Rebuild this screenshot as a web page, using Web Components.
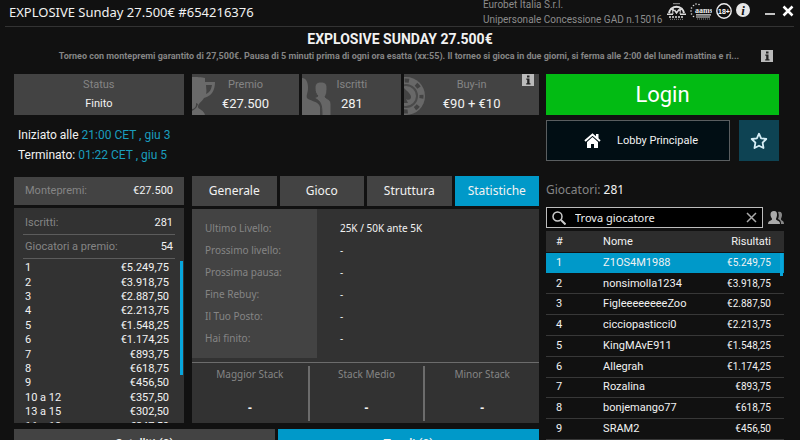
<!DOCTYPE html>
<html lang="it">
<head>
<meta charset="utf-8">
<meta name="viewport" content="width=device-width, initial-scale=1">
<title>EXPLOSIVE Sunday 27.500€</title>
<style>
html,body{margin:0;height:100%}
body{background:#111;color:#f2f2f2;font:12px/16px Roboto,"Liberation Sans",sans-serif;overflow:hidden;
--card:#434343;--panel:#323232;--muted:#858585;--blue:#0099c9;--tahoma:"Noto Sans","DejaVu Sans Condensed",sans-serif}
</style>
</head>
<body>
<tournament-lobby></tournament-lobby>
<script>
const define=(name,css,html,setup)=>{
  const t=document.createElement('template');
  t.innerHTML=`<style>*{box-sizing:border-box}button{font:inherit;color:inherit;border:0;margin:0;padding:0;background:none;cursor:pointer}svg{display:block}${css}</style>${html}`;
  customElements.define(name,class extends HTMLElement{
    constructor(){super();this.attachShadow({mode:'open'}).append(t.content.cloneNode(true));}
    connectedCallback(){if(setup)setup(this,this.shadowRoot);}
  });
};

define('title-bar',`
:host{display:flex;height:27px;margin:0 6px 0 5px;padding-left:4px;border-bottom:1px solid #333;align-items:flex-start}
h1{flex:1;margin:0;font:13px/25px var(--tahoma);white-space:nowrap}
p{margin:-3px 0 0;width:184px;font-size:10px;line-height:15px;color:#8c8c8c;white-space:nowrap}
.marks{display:flex;gap:4px;padding-top:3px;height:20px}
.win{display:flex;gap:6px;margin:5px 0 0 14px}
`,`
<h1>EXPLOSIVE Sunday 27.500€ #654216376</h1>
<p>Eurobet Italia S.r.l.<br>Unipersonale Concessione GAD n.15016</p>
<div class="marks">
<svg width="19" height="17" viewBox="0 0 19 17" fill="none" stroke="#ddd"><path d="M6 .7h7" stroke="#999"/><path d="M2 10A7.600 7.600 0 0 1 17 10" stroke-width="2"/><path d="M0 11.300h6M13 11.300h6" stroke-width="1.600"/><path d="M6 11c-1-5 1-7 3.500-7s4.500 2 3.500 7" stroke-width="1"/><path d="M3.500 5.500l3.500 2M15.500 5.500l-3.500 2M7.500 7l2 3L12 6.500" stroke-width="1.500"/><path d="M2 14h15" stroke-width="1.500" stroke-dasharray="2 1"/><path d="M3 16.300h13" stroke="#888" stroke-dasharray="1 1"/></svg>
<svg width="22" height="17" viewBox="0 0 22 17"><g fill="#ddd"><circle cx="1.500" cy="5" r=".8"/><circle cx="1" cy="8" r=".8"/><circle cx="1.500" cy="11" r=".8"/><circle cx="3.500" cy="2.500" r=".8"/><circle cx="3.500" cy="13.500" r=".8"/><circle cx="6" cy="1" r=".8"/><circle cx="9" cy="1.500" r=".8"/><path d="M6 11.300h15v1.200H6zM6 13.500h14v1H6z"/></g><path d="M7 16h13" stroke="#888" stroke-dasharray="1 1"/><text x="5" y="10" fill="#eee" font-family="Liberation Serif,serif" font-weight="bold" font-size="8">aams</text></svg>
<svg width="16" height="17" viewBox="0 0 16 17"><circle cx="8" cy="8" r="7.200" fill="none" stroke="#eee" stroke-width="1.400"/><text x="8" y="10.500" text-anchor="middle" fill="#fff" font-family="Liberation Sans,sans-serif" font-weight="bold" font-size="7">18+</text></svg>
<svg width="14" height="15" viewBox="0 0 14 15"><circle cx="7" cy="7" r="7" fill="#e6e6e6"/><text x="7" y="11.500" text-anchor="middle" fill="#111" font-family="Liberation Serif,serif" font-weight="bold" font-style="italic" font-size="13">i</text></svg>
</div>
<div class="win">
<button aria-label="Riduci"><svg width="12" height="12"><path d="M1 9h10" stroke="#fff" stroke-width="1.500"/></svg></button>
<button aria-label="Chiudi"><svg width="12" height="12"><path d="M1.500 1.500l9 9M10.500 1.500l-9 9" stroke="#fff" stroke-width="2.500"/></svg></button>
</div>`);

define('info-mark',`:host{display:block}svg{width:12px;height:12px}`,
`<svg viewBox="0 0 12 12"><path fill="#bbb" d="M0 0h12v12H0z"/><path fill="#222" d="M5 1.500h2.500v2H5zM4.300 4.500h3.200v4.700h1v1.300H4.200V9.200h1V5.800h-.9z"/></svg>`);

define('lobby-heading',`
:host{display:block;padding-top:3px}
h2{margin:0;font:bold 14px/19px Roboto,sans-serif;text-align:center}
div{display:flex;align-items:center;gap:8px;height:14px;margin-bottom:1px;padding:0 27px 0 45px}
p{margin:0;flex:1;text-align:center;font-weight:bold;font-size:9px;line-height:14px;color:#858585;white-space:nowrap;overflow:hidden;text-overflow:ellipsis}
`,`<h2>EXPLOSIVE SUNDAY 27.500€</h2><div><p>Torneo con montepremi garantito di 27,500€. Pausa di 5 minuti prima di ogni ora esatta (xx:55). Il torneo si gioca in due giorni, si ferma alle 2:00 del lunedí mattina e ri...</p><info-mark></info-mark></div>`);

define('stat-card',`
:host{display:block;position:relative;background:var(--card);height:41px;text-align:center;overflow:hidden}
.k{color:var(--muted);font-size:11px;line-height:14px;padding-top:4px}
.v{font-size:11px;line-height:16px;padding-top:4px}
:host([big]) .v{font-size:13px}
.i{position:absolute;left:0;bottom:0}
.k,.v{position:relative}
::slotted(info-mark){position:absolute;right:0;top:0}
`,`<div class="i"></div><div class="k"></div><div class="v"><slot></slot></div><slot name="info"></slot>`,(el,r)=>{
  r.querySelector('.k').textContent=el.getAttribute('label');
  const icons={
    cup:'<svg width="24" height="41" viewBox="0 0 24 41"><path fill="#6a6a6a" d="M0 3c4 0 10 0 13 1v4h10c0 8-3 14-11 16-2 4-6 5-6 9 0 2 6 3 7 8H0z"/><path fill="#434343" d="M14 11h6c-1 5-2 7-6 9 1-3 0-6 0-9zM0 35c2 0 4-2 4-4v-2l2 1c-1 4-3 5-6 7z"/></svg>',
    people:'<svg width="29" height="41" viewBox="0 0 29 41"><g fill="#666"><path d="M0 4c4 0 6 4 6 10 0 5-2 7-1 10 2 3 12 3 13 9v8H0z"/><path stroke="#434343" d="M13 14c0-4 2-6 6-6s6 2 6 6c0 5-1 7-2 9 2 2 6 3 6 7v12h-9c0-12-1-15-8-18 2-1 3-1 4-2-2-2-3-4-3-8z"/></g></svg>',
    chip:'<svg width="22" height="41" viewBox="0 0 22 41"><circle cx="2" cy="22" r="19" fill="#686868"/><circle cx="2" cy="22" r="15.500" fill="none" stroke="#434343" stroke-width="4" stroke-dasharray="4.500 7.700" stroke-dashoffset="2"/><circle cx="2" cy="22" r="11" fill="none" stroke="#4a4a4a" stroke-width="2"/><path fill="#444" d="M0 14c4 4 7 6 7 9 0 2-2 4-5 2l2 4H0z"/></svg>'};
  r.querySelector('.i').innerHTML=icons[el.getAttribute('icon')]||'';
});

define('start-times',`
:host{display:block;padding:10px 4px 0;line-height:20px;height:61px}
p{margin:0}span{color:#1a9dbd}
`,`<p>Iniziato alle <span>21:00 CET , giu 3</span></p><p>Terminato: <span>01:22 CET , giu 5</span></p>`);

define('prize-panel',`
:host{display:flex;flex-direction:column;gap:3px;font-size:11px;padding-top:1px}
.row{display:flex;justify-content:space-between;align-items:center;padding:0 2px}
.row span{color:var(--muted)}
.top{background:var(--card);height:28px;padding:0 11px}
.body{flex:1;background:var(--panel);padding:3px 9px 0;position:relative}
.body .row{height:24px;border-bottom:1px solid #5c5c5c}
.list{height:162px;margin-top:2px;overflow:hidden}
table{width:100%;height:173px;border-collapse:collapse;line-height:14px}
td{padding:0 2px}td+td{text-align:right;padding-right:6px}
.bar{position:absolute;right:1px;top:53px;width:3px;height:114px;background:#08a6dc}
`,`<div class="row top"><span>Montepremi:</span>€27.500</div>
<div class="body"><div class="row"><span>Iscritti:</span>281</div><div class="row"><span>Giocatori a premio:</span>54</div>
<div class="list"><table></table></div><div class="bar"></div></div>`,(el,r)=>{
  r.querySelector('table').innerHTML=[['1','5.249,75'],['2','3.918,75'],['3','2.887,50'],['4','2.213,75'],['5','1.548,25'],['6','1.174,25'],['7','893,75'],['8','618,75'],['9','456,50'],['10 a 12','357,50'],['13 a 15','302,50'],['16 a 18','247,50']].map(([a,b])=>`<tr><td>${a}</td><td>€${b}</td></tr>`).join('');
});

define('stats-panel',`
:host{display:flex;flex-direction:column;gap:3px;font-family:var(--tahoma);font-size:10px}
nav{display:grid;grid-template-columns:repeat(4,1fr);gap:3px}
nav button{height:30px;background:var(--card);font-size:12px}
nav button[aria-selected=true]{background:var(--blue)}
.body{background:var(--panel);flex:1;display:flex;flex-direction:column}
dl{margin:0;display:grid;grid-template-columns:36% 1fr}
dt,dd{margin:0;line-height:22px;height:22px}
dt{background:var(--card);color:var(--muted);padding-left:13px}
dd{padding-left:23px}
dt:first-of-type,dd:first-of-type{padding-top:8px;height:30px}
dt:last-of-type{height:31px}
.stacks{margin-top:4px;border-top:1px solid #6c6c6c;flex:1;display:grid;grid-template-columns:repeat(3,1fr);padding:3px 0 2px;text-align:center}
.stacks div+div{border-left:2px solid #6c6c6c}
.stacks span{display:block;color:var(--muted);line-height:16px;padding-bottom:18px}
b{font-size:12px;line-height:16px;display:block}
`,`<nav role="tablist"><button role="tab">Generale</button><button role="tab">Gioco</button><button role="tab">Struttura</button><button role="tab" aria-selected="true">Statistiche</button></nav>
<div class="body"><dl><dt>Ultimo Livello:</dt><dd>25K / 50K ante 5K</dd><dt>Prossimo livello:</dt><dd>-</dd><dt>Prossima pausa:</dt><dd>-</dd><dt>Fine Rebuy:</dt><dd>-</dd><dt>Il Tuo Posto:</dt><dd>-</dd><dt>Hai finito:</dt><dd>-</dd></dl>
<div class="stacks"><div><span>Maggior Stack</span><b>-</b></div><div><span>Stack Medio</span><b>-</b></div><div><span>Minor Stack</span><b>-</b></div></div></div>`);

define('lobby-actions',`
:host{display:grid;grid-template-columns:1fr 40px;gap:5px 9px;padding-right:5px}
.login{grid-column:1/-1;background:#02bb13;height:41px;font-size:22px;color:#fff}
.main{height:41px;background:#010e14;border:1px solid #5a5e60;display:flex;align-items:center;justify-content:center;gap:16px;padding-left:6px;font-size:11px}
.star{background:#0e4353;display:grid;place-items:center}
`,`<button class="login">Login</button>
<button class="main"><svg width="17" height="15" viewBox="0 0 17 15"><path d="M1 8l7.500-6.500L16 8" fill="none" stroke="#fff" stroke-width="2"/><path fill="#fff" d="M12 1h2.500v5L12 4zM3 9l5.500-5L14 9v6h-4v-4H7v4H3z"/></svg>Lobby Principale</button>
<button class="star" aria-label="Preferiti"><svg width="18" height="18" viewBox="0 0 18 18"><path d="M9 1.700l2.100 4.600 5.200.7-3.700 3.700.9 5.300L9 13.700 4.500 16l.9-5.300L1.700 7l5.200-.7z" fill="none" stroke="#d5edf5" stroke-width="1.800" stroke-linejoin="round"/></svg></button>`);

define('player-list',`
:host{display:block;padding-top:19px}
h3{margin:0;font:12px/20px var(--tahoma);color:var(--muted)}
h3 span{color:#f2f2f2}
.find{display:flex;gap:5px;align-items:center;margin-top:7px}
label{flex:1;display:flex;align-items:center;height:21px;border:1px solid #bdbdbd;background:#000;padding:0 5px;min-width:0}
input{flex:1;min-width:0;border:0;padding:0 0 0 9px;background:none;outline:0;color:#fff;font:11px/16px var(--tahoma)}
input::placeholder{color:#eee;opacity:1}
.wrap{position:relative}
table{width:100%;border-collapse:collapse;table-layout:fixed}
.head{margin-top:3px;background:#2d2d2d;height:21px}
.rows{margin-top:1px;height:187px}
th{font-weight:normal;text-align:left;padding:0;font-size:11px}
td{padding:0;font-size:11px;line-height:16px;border-bottom:1px solid #383838}
:is(th,td):first-child{width:24%;padding-left:10px}
:is(th,td):last-child{width:32%;text-align:right;padding-right:13px}
td:last-child{font-size:10px}
.on{background:var(--blue)}.on td{border-color:#111}
.bar{position:absolute;right:1px;top:0;width:3px;height:23px;background:#08a6dc}
`,`<h3>Giocatori: <span>281</span></h3>
<div class="find"><label><svg width="14" height="14" fill="none" stroke="#ccc"><circle cx="5.500" cy="5.500" r="4.500" stroke-width="1.500"/><path d="M9 9l4.500 4.500" stroke-width="2"/></svg><input aria-label="Trova giocatore" placeholder="Trova giocatore"><button aria-label="Cancella"><svg width="11" height="11"><path d="M1 1l9 9M10 1l-9 9" stroke="#aaa" stroke-width="1.500"/></svg></button></label>
<svg width="16" height="14" viewBox="0 0 16 14"><path fill="#888" d="M10 1c3-1 4 1 4 3s-1 3-1 4c0 2 3 1 3 5h-3c0-3-1-4-3-5 1-2 1-5 0-7z"/><path fill="#aaa" d="M2.500 4c0-3 1-4 3.500-4s3 1 3 4c0 2-1 3-1 4 0 2 4 1 4 5H0c0-4 4-3 4-5 0-1-1.500-2-1.500-4z"/></svg></div>
<table class="head"><tr><th>#</th><th>Nome</th><th>Risultati</th></tr></table>
<div class="wrap"><table class="rows"></table><div class="bar"></div></div>`,(el,r)=>{
  r.querySelector('.rows').innerHTML=[['Z1OS4M1988','5.249,75'],['nonsimolla1234','3.918,75'],['FigleeeeeeeeZoo','2.887,50'],['cicciopasticci0','2.213,75'],['KingMAvE911','1.548,25'],['Allegrah','1.174,25'],['Rozalina','893,75'],['bonjemango77','618,75'],['SRAM2','456,50']].map(([n,v],i)=>`<tr${i?'':' class="on"'}><td>${i+1}</td><td>${n}</td><td>€${v}</td></tr>`).join('');
});

define('bottom-tabs',`
:host{display:grid;grid-template-columns:1fr 1fr;gap:3px;margin-top:6px}
button{height:29px;background:var(--card);font:500 12px/16px Roboto,sans-serif}
button+button{background:var(--blue)}
`,`<button>Satelliti (0)</button><button>Tavoli (0)</button>`);

define('tournament-lobby',`
:host{display:block;height:100%;overflow:hidden}
main{display:grid;grid-template-columns:525fr 238fr;gap:7px;padding:10px 16px 0 14px}
main>*{min-width:0}
.cards{display:grid;grid-template-columns:175fr 108fr 99fr 135fr;gap:3px}
.cards :first-child{margin-right:5px}
.cards info-mark{margin-right:0}
.panels{display:grid;grid-template-columns:170fr 347fr;gap:8px}
`,`<title-bar></title-bar><lobby-heading></lobby-heading>
<main><section>
<div class="cards"><stat-card label="Status">Finito</stat-card><stat-card big icon="cup" label="Premio">€27.500</stat-card><stat-card big icon="people" label="Iscritti">281</stat-card><stat-card big icon="chip" label="Buy-in">€90 + €10<info-mark slot="info"></info-mark></stat-card></div>
<start-times></start-times>
<div class="panels"><prize-panel></prize-panel><stats-panel></stats-panel></div>
<bottom-tabs></bottom-tabs>
</section><aside><lobby-actions></lobby-actions><player-list></player-list></aside></main>`);
</script>
</body>
</html>
